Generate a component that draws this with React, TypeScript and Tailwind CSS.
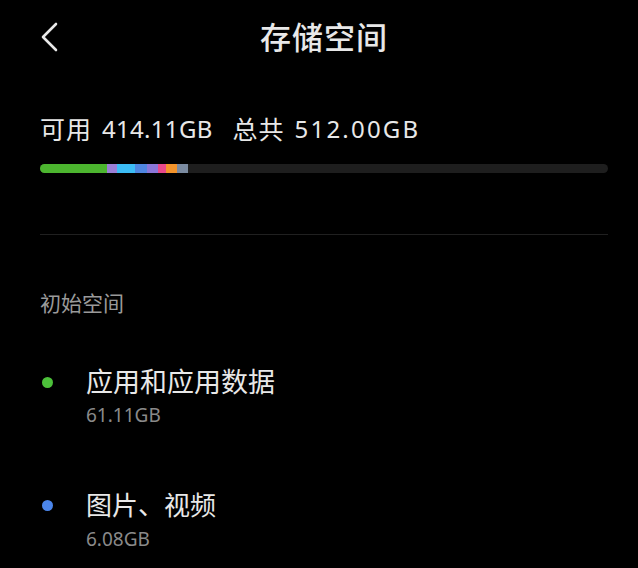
import React from "react";

const segs = [
  { w: 67, c: "#4cb52f" },
  { w: 10, c: "#9b7fd6" },
  { w: 18, c: "#3cbcf5" },
  { w: 12, c: "#4f86e0" },
  { w: 11, c: "#8a76d8" },
  { w: 8, c: "#e8488a" },
  { w: 11, c: "#f2932b" },
  { w: 11, c: "#7a8aa0" },
];

export default function App() {
  return (
    <div
      className="w-[638px] h-[568px] bg-black overflow-hidden text-[#e8e8e8]"
      style={{ fontFamily: '"Noto Sans", "Noto Sans CJK SC", sans-serif' }}
    >
      <div className="pl-[40px] pr-[30px]">
        <div className="h-[74px] grid grid-cols-[1fr_auto_1fr] items-center">
          <div className="flex items-center">
            <svg width="20" height="32" viewBox="0 0 20 32" className="-ml-[1px]">
              <path d="M17 3 L4 16 L17 29" fill="none" stroke="#e8e8e8" strokeWidth="2.6" strokeLinecap="round" strokeLinejoin="round" />
            </svg>
          </div>
          <div className="text-[31px] leading-[40px] font-medium tracking-[1px]">存储空间</div>
          <div />
        </div>

        <div className="mt-[39px] h-[32px] flex items-center text-[24px] leading-[32px] whitespace-nowrap">
          <span className="text-[25px] tracking-[1px]">可用</span>
          <span className="ml-[10px] tracking-[0.3px]">414.11GB</span>
          <span className="ml-[20px] text-[25px] tracking-[1px]">总共</span>
          <span className="ml-[10px] tracking-[2.2px]">512.00GB</span>
        </div>

        <div className="mt-[19px] h-[9px] rounded-full bg-[#1e1e1e] overflow-hidden flex">
          {segs.map((s, i) => (
            <div key={i} style={{ width: s.w, backgroundColor: s.c }} className="h-full" />
          ))}
        </div>

        <div className="mt-[61px] h-px bg-[#202020]" />

        <div className="mt-[54px] text-[21px] leading-[28px] text-[#9a9a9a]">初始空间</div>

        <div className="mt-[48px] flex items-start">
          <div className="w-[11px] h-[11px] rounded-full bg-[#4cc13a] mt-[12px] ml-[2px]" />
          <div className="ml-[33px]">
            <div className="text-[27px] leading-[34px]">应用和应用数据</div>
            <div className="mt-[3px] text-[19px] leading-[26px] text-[#8a8a8a]">61.11GB</div>
          </div>
        </div>

        <div className="mt-[60px] flex items-start">
          <div className="w-[11px] h-[11px] rounded-full bg-[#4b86ec] mt-[12px] ml-[2px]" />
          <div className="ml-[33px]">
            <div className="text-[26px] leading-[34px]">图片、视频</div>
            <div className="mt-[4px] text-[19px] leading-[26px] text-[#8a8a8a]">6.08GB</div>
          </div>
        </div>
      </div>
    </div>
  );
}
